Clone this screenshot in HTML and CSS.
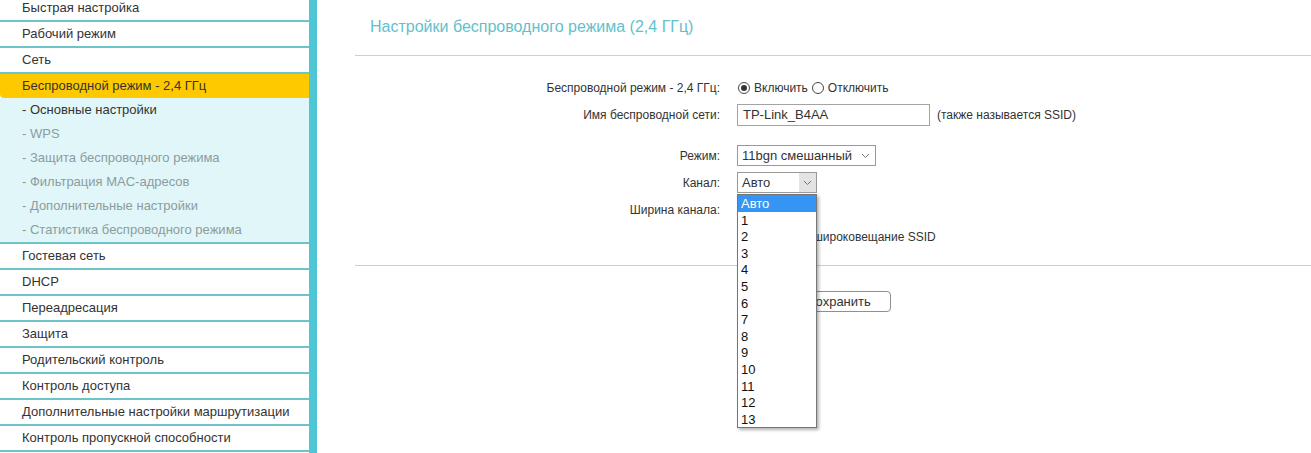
FILE: index.html
```html
<!DOCTYPE html>
<html lang="ru">
<head>
    <meta charset="UTF-8">
    <meta name="viewport" content="width=device-width, initial-scale=1.0">
    <link rel="stylesheet" href="styles.css">
    <title>Беспроводной режим - 2,4 ГГц</title>
</head>
<body>
    <div class="page">
        <nav class="menu">
            <div class="menu-item">Быстрая настройка</div>
            <div class="menu-item">Рабочий режим</div>
            <div class="menu-item">Сеть</div>
            <div class="menu-item active">Беспроводной режим - 2,4 ГГц</div>
            <div class="submenu">
                <div class="sub-item current">- Основные настройки</div>
                <div class="sub-item">- WPS</div>
                <div class="sub-item">- Защита беспроводного режима</div>
                <div class="sub-item">- Фильтрация MAC-адресов</div>
                <div class="sub-item">- Дополнительные настройки</div>
                <div class="sub-item">- Статистика беспроводного режима</div>
            </div>
            <div class="menu-item">Гостевая сеть</div>
            <div class="menu-item">DHCP</div>
            <div class="menu-item">Переадресация</div>
            <div class="menu-item">Защита</div>
            <div class="menu-item">Родительский контроль</div>
            <div class="menu-item">Контроль доступа</div>
            <div class="menu-item">Дополнительные настройки маршрутизации</div>
            <div class="menu-item">Контроль пропускной способности</div>
        </nav>

        <main class="content">
            <h1 class="title">Настройки беспроводного режима (2,4 ГГц)</h1>
            <div class="divider"></div>

            <div class="form">
                <div class="label">Беспроводной режим - 2,4 ГГц:</div>
                <div class="value">
                    <span class="radio checked"></span><span class="radio-text">Включить</span>
                    <span class="radio"></span><span class="radio-text">Отключить</span>
                </div>

                <div class="label">Имя беспроводной сети:</div>
                <div class="value">
                    <div class="text-input">TP-Link_B4AA</div>
                    <span class="note">(также называется SSID)</span>
                </div>

                <div class="spacer"></div>

                <div class="label">Режим:</div>
                <div class="value">
                    <div class="select mode">
                        <span>11bgn смешанный</span>
                        <svg class="chevron" width="9" height="6" viewBox="0 0 9 6"><polyline points="1,1 4.5,4.5 8,1" fill="none" stroke="#777" stroke-width="1"/></svg>
                    </div>
                </div>

                <div class="label">Канал:</div>
                <div class="value">
                    <div class="channel-wrap">
                        <div class="select channel">
                            <span>Авто</span>
                            <span class="arrow-box">
                                <svg class="chevron" width="9" height="6" viewBox="0 0 9 6"><polyline points="1,1 4.5,4.5 8,1" fill="none" stroke="#777" stroke-width="1"/></svg>
                            </span>
                        </div>
                        <ul class="dropdown">
                            <li class="selected">Авто</li>
                            <li>1</li>
                            <li>2</li>
                            <li>3</li>
                            <li>4</li>
                            <li>5</li>
                            <li>6</li>
                            <li>7</li>
                            <li>8</li>
                            <li>9</li>
                            <li>10</li>
                            <li>11</li>
                            <li>12</li>
                            <li>13</li>
                        </ul>
                    </div>
                </div>

                <div class="label">Ширина канала:</div>
                <div class="value">
                    <div class="select channel"></div>
                </div>

                <div class="label"></div>
                <div class="value">
                    <span class="checkbox"></span><span class="radio-text">Включить широковещание SSID</span>
                </div>
            </div>

            <div class="divider"></div>

            <div class="actions">
                <button class="save">Сохранить</button>
            </div>
        </main>
    </div>
</body>
</html>
```

FILE: styles.css
```css
* {
    margin: 0;
    padding: 0;
    box-sizing: border-box;
}

body {
    font-family: "Liberation Sans", Arial, sans-serif;
    color: #333;
    background: #fff;
}

.page {
    display: flex;
    height: 453px;
    overflow: hidden;
}

/* left menu */
.menu {
    width: 317px;
    flex-shrink: 0;
    margin-top: -4px;
    border-right: 8px solid #4ec6d4;
    font-size: 13px;
}

.menu-item {
    height: 26px;
    line-height: 24px;
    padding-left: 22px;
    border-bottom: 2px solid #6cc4ca;
    white-space: nowrap;
    overflow: hidden;
    color: #333;
}

.menu-item.active {
    height: 24px;
    background: #ffc900;
    border-bottom: none;
    border-bottom-left-radius: 4px;
}

.submenu {
    background: #e1f6f8;
    border-bottom: 2px solid #6cc4ca;
}

.sub-item {
    height: 24px;
    line-height: 24px;
    padding-left: 22px;
    color: #8c9c9e;
    white-space: nowrap;
}

.sub-item.current {
    color: #333;
}

/* right side */
.content {
    flex: 1;
    margin-left: 38px;
}

.title {
    height: 55px;
    line-height: 53px;
    padding-left: 15px;
    font-size: 16px;
    font-weight: normal;
    color: #63bfcb;
}

.divider {
    height: 1px;
    background: #cfcfcf;
}

.form {
    display: grid;
    grid-template-columns: 365px 1fr;
    grid-template-rows: 27px 27px 14px 27px 27px 27px 27px;
    column-gap: 17px;
    padding: 18px 0 15px;
    font-size: 12px;
}

.form .spacer {
    grid-column: 1 / 3;
}

.label {
    display: flex;
    align-items: center;
    justify-content: flex-end;
    color: #333;
}

.value {
    display: flex;
    align-items: center;
}

.radio {
    width: 12px;
    height: 12px;
    border: 1px solid #444;
    border-radius: 50%;
    margin-left: 1px;
    position: relative;
}

.radio.checked::after {
    content: "";
    position: absolute;
    left: 2px;
    top: 2px;
    width: 6px;
    height: 6px;
    border-radius: 50%;
    background: #333;
}

.radio-text {
    margin: 0 3px 0 4px;
}

.checkbox {
    width: 13px;
    height: 13px;
    border: 1px solid #444;
    border-radius: 2px;
    margin-right: 2px;
}

.text-input {
    width: 193px;
    height: 22px;
    line-height: 20px;
    border: 1px solid #a3a3a3;
    padding-left: 5px;
    font-size: 13px;
}

.note {
    margin-left: 7px;
}

.select {
    height: 21px;
    border: 1px solid #999;
    display: flex;
    align-items: center;
    justify-content: space-between;
    padding-left: 4px;
    font-size: 13px;
    background: #fff;
}

.select.mode {
    width: 139px;
    padding-right: 5px;
}

.select.channel {
    width: 80px;
}

.arrow-box {
    width: 17px;
    height: 19px;
    background: #e3e3e3;
    display: flex;
    align-items: center;
    justify-content: center;
}

.channel-wrap {
    position: relative;
}

.dropdown {
    position: absolute;
    left: 0;
    top: 22px;
    width: 80px;
    list-style: none;
    border: 1px solid #767676;
    background: #fff;
    box-shadow: 2px 2px 3px rgba(0, 0, 0, 0.3);
    font-size: 13px;
    z-index: 10;
}

.dropdown li {
    height: 16.6px;
    line-height: 17px;
    padding-left: 3px;
    color: #111;
}

.dropdown li.selected {
    background: #3595f4;
    color: #fff;
}

.actions {
    padding: 25px 0 0 431px;
}

.save {
    width: 105px;
    height: 21px;
    font-family: "Liberation Sans", Arial, sans-serif;
    font-size: 13px;
    color: #333;
    background: #fff;
    border: 1px solid #8f8f8f;
    border-radius: 4px;
}
```
